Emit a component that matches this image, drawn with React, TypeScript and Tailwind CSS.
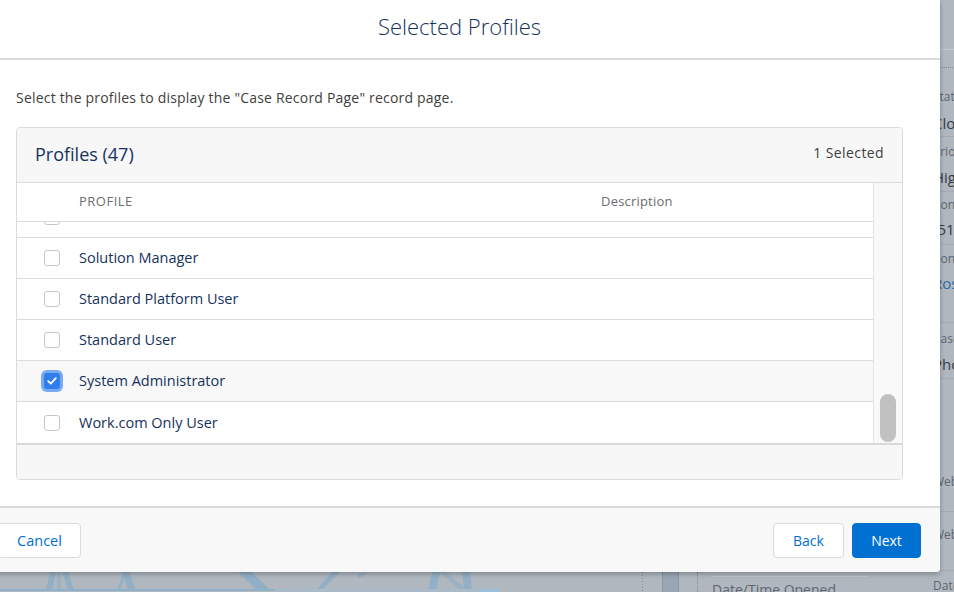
import React from "react";

const Check = ({ checked }: { checked?: boolean }) =>
  checked ? (
    <div className="w-[16px] h-[16px] rounded-[3px] bg-[#2f7ee9] shadow-[0_0_0_3px_#76aaf3] flex items-center justify-center shrink-0">
      <svg width="10" height="8" viewBox="0 0 10 8">
        <path d="M1.2 4.2 L3.8 6.6 L8.8 1.2" fill="none" stroke="#fff" strokeWidth="1.8" strokeLinecap="round" strokeLinejoin="round" />
      </svg>
    </div>
  ) : (
    <div className="w-[16px] h-[16px] rounded-[3px] border border-[#c9c7c5] bg-white shrink-0" />
  );

const Row = ({ name, checked, last }: { name: string; checked?: boolean; last?: boolean }) => (
  <div className={`h-[41px] shrink-0 ${last ? "" : "border-b border-[#dddbda]"} flex items-center ${checked ? "bg-[#f8f8f8]" : "bg-white"}`}>
    <div className="w-[62px] pl-[27px] flex items-center">
      <Check checked={checked} />
    </div>
    <span className="text-[14.5px] text-[#16325c]">{name}</span>
  </div>
);

const Field = ({ label, value, h, pt, mt, blue }: { label: string; value?: string; h: string; pt: string; mt?: string; blue?: boolean }) => (
  <div className={`${h} ${pt} border-b border-[#a3aab4] whitespace-nowrap`}>
    <div className="text-[12px] leading-[16px] text-[#5d6672]">{label}</div>
    {value && (
      <div className={`${mt} text-[15px] leading-[20px] ${blue ? "text-[#2e65a3]" : "text-[#363d47]"}`}>{value}</div>
    )}
  </div>
);

export default function App() {
  return (
    <div className="relative w-[954px] h-[592px] overflow-hidden bg-[#b0b7bf] font-['Open_Sans',sans-serif]">
      {/* Background page (under the modal) */}
      <div className="flex w-[954px] h-[592px]">
        <div className="w-[925px] flex flex-col shrink-0">
          <div className="h-[572px] shrink-0" />
          <div className="h-[20px] flex">
            <svg width="643" height="20" viewBox="0 0 643 20" className="shrink-0">
              <g fill="#93afc6">
                <polygon points="50,0 56,0 52,18 46,18" />
                <polygon points="62,0 68,0 74,18 68,18" />
                <polygon points="57,0 61,0 61,18 57,18" opacity="0.6" />
                <polygon points="122,0 129,0 136,18 128,18" />
                <polygon points="124,0 127,0 120,18 117,18" />
                <polygon points="238,0 252,0 270,18 256,18" />
                <polygon points="332,0 340,0 322,18 316,18" />
                <polygon points="358,2 368,0 363,4 358,6" />
                <polygon points="432,0 440,0 436,18 428,18" />
                <polygon points="440,0 446,0 468,18 460,18" opacity="0.7" />
                <polygon points="462,0 470,0 472,18 464,18" />
              </g>
              <rect x="0" y="17" width="275" height="2" fill="#8fb2cb" />
              <rect x="275" y="17" width="205" height="2" fill="#a4bccd" />
              <rect x="480" y="17" width="20" height="3" fill="#9cc0da" />
              <line x1="642.5" y1="0" x2="642.5" y2="20" stroke="#7f8896" strokeDasharray="1 2" />
            </svg>
            <div className="w-[19px] shrink-0" />
            <div className="w-[17px] h-[20px] bg-[#9aa6b6] border-x border-dotted border-[#7f8896] shrink-0" />
            <div className="w-[19px] h-[20px] border-r border-dotted border-[#7f8896] shrink-0" />
            <div className="pl-[14px] w-[171px] shrink-0">
              <div className="h-[5px] border-b border-[#c0c6ce] w-[157px]" />
              <div className="mt-[4px] text-[14px] leading-[18px] text-[#5d6672] whitespace-nowrap">Date/Time Opened</div>
            </div>
          </div>
        </div>
        <div className="w-[29px] shrink-0 pl-[8px] overflow-hidden">
          <div className="w-[120px]">
            <div className="h-[50px] border-b border-[#c3c8cf]" />
            <div className="h-[18px] border-b border-dotted border-[#7f8896]" />
            <Field h="h-[69px]" pt="pt-[21px]" mt="mt-[8px]" label="Status" value="Closed" />
            <Field h="h-[55px]" pt="pt-[7px]" mt="mt-[7px]" label="Priority" value="High" />
            <Field h="h-[53px]" pt="pt-[5px]" mt="mt-[6px]" label="Contact Phone" value="(515) 555-0101" />
            <Field h="h-[78px]" pt="pt-[6px]" mt="mt-[6px]" label="Contact Email" value="Rose Gonzalez" blue />
            <Field h="h-[56px]" pt="pt-[8px]" mt="mt-[7px]" label="Case Origin" value="Phone" />
            <Field h="h-[133px]" pt="pt-[95px]" label="Web Email" />
            <Field h="h-[59px]" pt="pt-[15px]" label="Web Company" />
            <div className="pt-[7px] text-[12px] leading-[16px] text-[#5d6672]">Date/Time Closed</div>
          </div>
        </div>
      </div>

      {/* Modal */}
      <div className="absolute left-[-21px] top-0 w-[961px] h-[572px] bg-white rounded-br-[4px] shadow-[0_2px_5px_rgba(0,0,0,0.28)] flex flex-col overflow-hidden">
        <div className="h-[60px] border-b-2 border-[#dddbda] flex items-center justify-center pb-[6px] shrink-0">
          <h2 className="text-[22px] text-[#16325c] font-light">Selected Profiles</h2>
        </div>
        <div className="flex-1 px-[37px] pt-[28px]">
          <p className="text-[14px] tracking-[0.2px] leading-[20px] text-[#3e3e3c]">Select the profiles to display the "Case Record Page" record page.</p>
          <div className="mt-[19px] border border-[#dddbda] rounded-[4px] overflow-hidden">
            <div className="h-[55px] bg-[#f7f7f7] border-b border-[#dddbda] flex items-center justify-between px-[18px] pb-[2px]">
              <span className="text-[18px] text-[#16325c]">Profiles (47)</span>
              <span className="text-[14px] tracking-[0.4px] text-[#3e3e3c] pb-[3px]">1 Selected</span>
            </div>
            <div className="flex h-[262px] border-b-2 border-[#d8d8d8]">
              <div className="flex-1 flex flex-col">
                <div className="h-[39px] border-b border-[#dddbda] flex items-center shrink-0">
                  <span className="w-[584px] pl-[62px] text-[13px] tracking-[0.5px] text-[#6b6d70] uppercase">Profile</span>
                  <span className="text-[13px] tracking-[0.2px] text-[#6b6d70]">Description</span>
                </div>
                <div className="h-[16px] overflow-hidden border-b border-[#dddbda] shrink-0">
                  <div className="-mt-[26px] h-[41px] flex items-center">
                    <div className="w-[62px] pl-[27px] flex items-center">
                      <Check />
                    </div>
                    <span className="text-[14.5px] text-[#16325c]">Silver Partner User</span>
                  </div>
                </div>
                <Row name="Solution Manager" />
                <Row name="Standard Platform User" />
                <Row name="Standard User" />
                <Row name="System Administrator" checked />
                <Row name="Work.com Only User" last />
              </div>
              <div className="w-[29px] border-l border-[#e3e3e3] bg-[#f9f9f9] flex flex-col justify-end items-center pb-[1px] shrink-0">
                <div className="w-[16px] h-[48px] rounded-full bg-[#c1c1c1]" />
              </div>
            </div>
            <div className="h-[34px] bg-[#f7f7f7]" />
          </div>
        </div>
        <div className="h-[66px] border-t-2 border-[#dddbda] bg-[#f8f8f8] px-[19px] pt-[15px] flex justify-between shrink-0">
          <button className="h-[35px] w-[83px] bg-white border border-[#dddbda] rounded-[4px] text-[14.5px] text-[#0070d2]">Cancel</button>
          <div className="flex gap-[8px]">
            <button className="h-[35px] w-[71px] bg-white border border-[#dddbda] rounded-[4px] text-[14px] text-[#0070d2]">Back</button>
            <button className="h-[35px] w-[69px] bg-[#0070d2] border border-[#0070d2] rounded-[4px] text-[14px] text-white">Next</button>
          </div>
        </div>
      </div>
    </div>
  );
}
